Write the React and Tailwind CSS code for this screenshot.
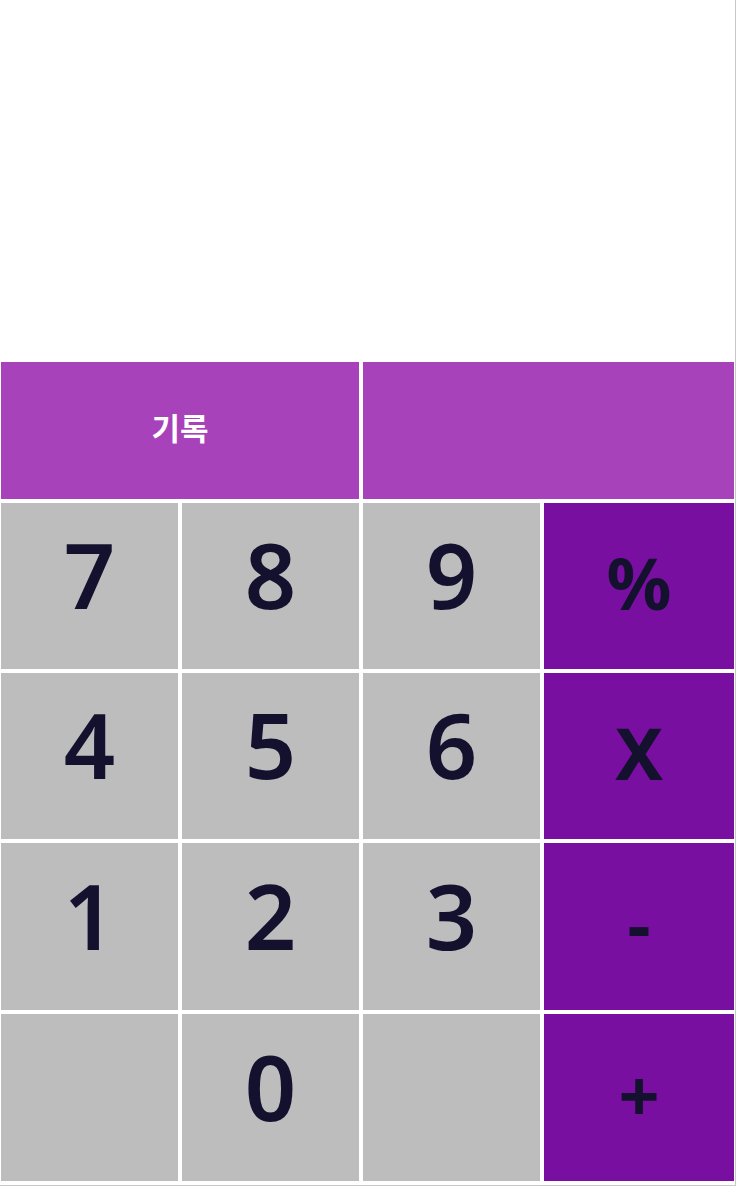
export default function App() {
  const rows = [
    ['7', '8', '9', '%'],
    ['4', '5', '6', 'X'],
    ['1', '2', '3', '-'],
    ['', '0', '', '+'],
  ];

  return (
    <div
      className="w-[736px] h-[1186px] bg-white border-r border-b border-[#c9c9c9] flex flex-col"
      style={{ fontFamily: '"Noto Sans", "Noto Sans CJK KR", sans-serif' }}
    >
      {/* display */}
      <div className="h-[362px] shrink-0" />

      <div className="grid grid-cols-[177px_177px_177px_190px] grid-rows-[137px_166px_166px_167px_167px] gap-1 pl-[1px]">
        <button className="col-span-2 bg-[#a742ba] text-white text-[31px] font-bold flex items-center justify-center pb-1">
          기록
        </button>
        <button className="col-span-2 bg-[#a742ba]" />

        {rows.map((row, i) =>
          row.map((key, j) =>
            j === 3 ? (
              <button
                key={`${i}-${j}`}
                className="bg-[#790fa1] text-[#14112e] text-[72px] font-bold leading-none flex items-center justify-center pb-2"
              >
                {key}
              </button>
            ) : (
              <button
                key={`${i}-${j}`}
                className="bg-[#bdbdbd] text-[#14112e] text-[90px] font-semibold leading-none flex items-center justify-center pb-6"
              >
                {key}
              </button>
            )
          )
        )}
      </div>
    </div>
  );
}
